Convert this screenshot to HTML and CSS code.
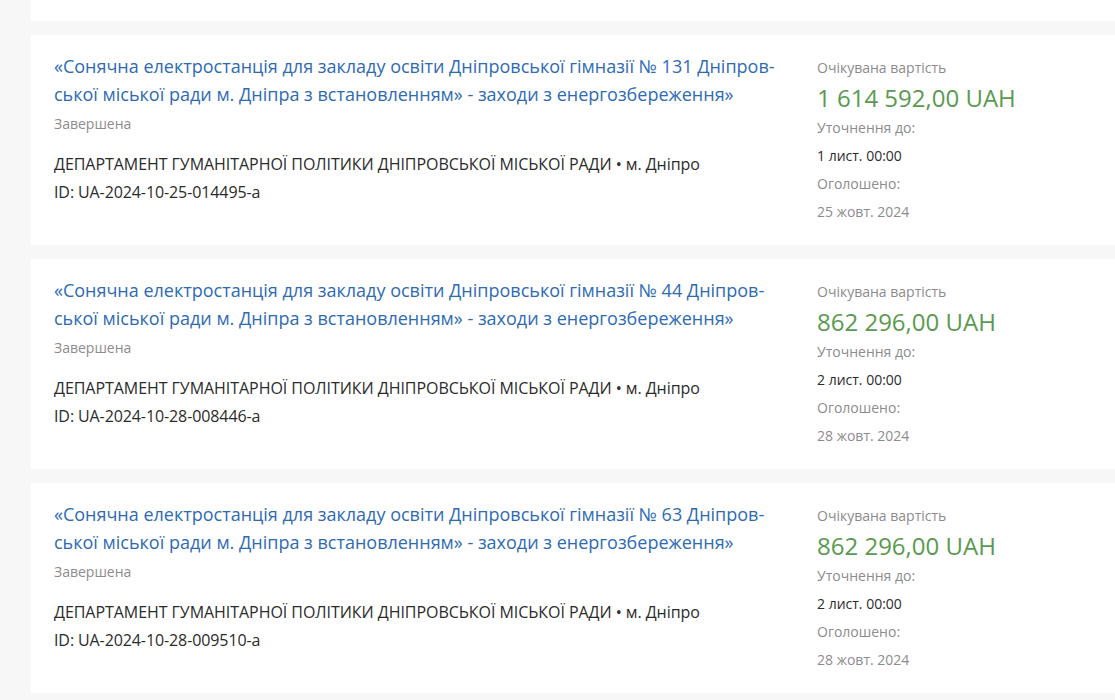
FILE: index.html
```html
<!DOCTYPE html>
<html lang="uk">
<head>
<meta charset="utf-8">
<title>Тендери</title>
<link rel="stylesheet" href="styles.css">
</head>
<body>
<div class="list">
  <div class="card card-tail"></div>

  <div class="card">
    <div class="main">
      <a class="title" href="#">«Сонячна електростанція для закладу освіти Дніпровської гімназії № 131 Дніпров&shy;ської міської ради м. Дніпра з встановленням» - заходи з енергозбереження»</a>
      <div class="status">Завершена</div>
      <div class="org">ДЕПАРТАМЕНТ ГУМАНІТАРНОЇ ПОЛІТИКИ ДНІПРОВСЬКОЇ МІСЬКОЇ РАДИ • м. Дніпро</div>
      <div class="tid">ID: UA-2024-10-25-014495-a</div>
    </div>
    <div class="side">
      <div class="label">Очікувана вартість</div>
      <div class="price">1 614 592,00 UAH</div>
      <div class="label">Уточнення до:</div>
      <div class="value">1 лист. 00:00</div>
      <div class="label">Оголошено:</div>
      <div class="label">25 жовт. 2024</div>
    </div>
  </div>

  <div class="card">
    <div class="main">
      <a class="title" href="#">«Сонячна електростанція для закладу освіти Дніпровської гімназії № 44 Дніпров&shy;ської міської ради м. Дніпра з встановленням» - заходи з енергозбереження»</a>
      <div class="status">Завершена</div>
      <div class="org">ДЕПАРТАМЕНТ ГУМАНІТАРНОЇ ПОЛІТИКИ ДНІПРОВСЬКОЇ МІСЬКОЇ РАДИ • м. Дніпро</div>
      <div class="tid">ID: UA-2024-10-28-008446-a</div>
    </div>
    <div class="side">
      <div class="label">Очікувана вартість</div>
      <div class="price">862 296,00 UAH</div>
      <div class="label">Уточнення до:</div>
      <div class="value">2 лист. 00:00</div>
      <div class="label">Оголошено:</div>
      <div class="label">28 жовт. 2024</div>
    </div>
  </div>

  <div class="card">
    <div class="main">
      <a class="title" href="#">«Сонячна електростанція для закладу освіти Дніпровської гімназії № 63 Дніпров&shy;ської міської ради м. Дніпра з встановленням» - заходи з енергозбереження»</a>
      <div class="status">Завершена</div>
      <div class="org">ДЕПАРТАМЕНТ ГУМАНІТАРНОЇ ПОЛІТИКИ ДНІПРОВСЬКОЇ МІСЬКОЇ РАДИ • м. Дніпро</div>
      <div class="tid">ID: UA-2024-10-28-009510-a</div>
    </div>
    <div class="side">
      <div class="label">Очікувана вартість</div>
      <div class="price">862 296,00 UAH</div>
      <div class="label">Уточнення до:</div>
      <div class="value">2 лист. 00:00</div>
      <div class="label">Оголошено:</div>
      <div class="label">28 жовт. 2024</div>
    </div>
  </div>
</div>
</body>
</html>
```

FILE: styles.css
```css
html, body {
  margin: 0;
  padding: 0;
}
body {
  background: #f7f7f7;
  font-family: "Open Sans", "Noto Sans", sans-serif;
  color: #333;
  overflow: hidden;
  width: 1115px;
  height: 700px;
}
.list {
  display: flex;
  flex-direction: column;
  gap: 14px;
  padding-left: 31px;
}
.card {
  background: #fff;
  width: 1120px;
  height: 210px;
  box-sizing: border-box;
  padding: 17px 0 0 23px;
  display: flex;
  gap: 23px;
}
.card-tail {
  height: 21px;
  padding: 0;
}
.main {
  width: 740px;
  flex: none;
}
.title {
  display: block;
  color: #2e6bb3;
  text-decoration: none;
  font-size: 18px;
  line-height: 28px;
  hyphens: manual;
}
.status {
  margin-top: 6px;
  font-size: 14px;
  line-height: 20px;
  color: #8c8c8c;
}
.org {
  margin-top: 16px;
  font-size: 16px;
  line-height: 28px;
  letter-spacing: -0.05px;
  color: #2b2b2b;
}
.tid {
  font-size: 16px;
  line-height: 28px;
  letter-spacing: -0.1px;
  color: #2b2b2b;
}
.side {
  padding-top: 2px;
  display: flex;
  flex-direction: column;
}
.label {
  font-size: 14px;
  line-height: 28px;
  color: #8c8c8c;
}
.value {
  font-size: 14px;
  line-height: 28px;
  color: #2b2b2b;
}
.price {
  font-size: 24px;
  line-height: 32px;
  color: #5a9a50;
}
```
